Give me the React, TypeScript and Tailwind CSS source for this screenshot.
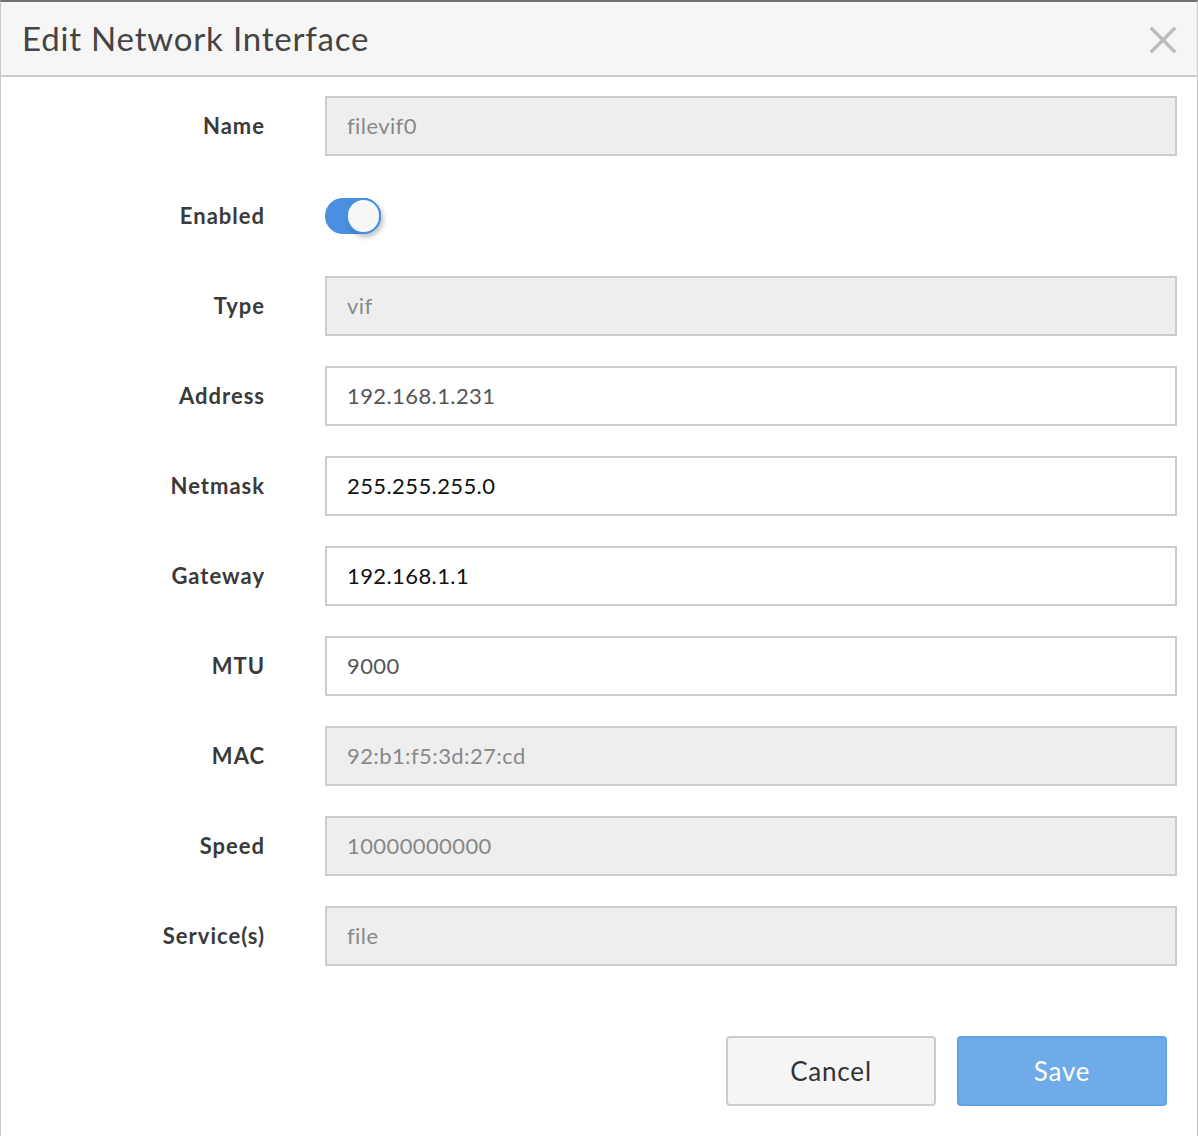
const fields = [
  { label: "Name", value: "filevif0", disabled: true },
  { label: "Enabled", toggle: true },
  { label: "Type", value: "vif", disabled: true },
  { label: "Address", value: "192.168.1.231", tone: "text-[#555]" },
  { label: "Netmask", value: "255.255.255.0", tone: "text-[#111]" },
  { label: "Gateway", value: "192.168.1.1", tone: "text-[#111]" },
  { label: "MTU", value: "9000", tone: "text-[#555]" },
  { label: "MAC", value: "92:b1:f5:3d:27:cd", disabled: true },
  { label: "Speed", value: "10000000000", disabled: true },
  { label: "Service(s)", value: "file", disabled: true },
];

function Toggle() {
  return (
    <div className="relative w-[56px] h-[36px] rounded-full bg-[#4a90e2]">
      <div className="absolute right-0 top-0 w-[35px] h-[36px] rounded-full bg-[#f7f7f7] border-2 border-[#4a90e2] shadow-[2px_3px_5px_rgba(0,0,0,0.25)]" />
    </div>
  );
}

export default function App() {
  return (
    <div className="w-[1198px] h-[1136px] bg-white font-['Lato',sans-serif] border-t-2 border-[#707070] border-l border-r border-l-[#c8c8c8] border-r-[#c8c8c8] overflow-hidden">
      <div className="h-[75px] bg-[#f6f6f6] border-b-2 border-[#cccccc] flex items-center justify-between pl-[21px] pr-[20px]">
        <h1 className="text-[33px] text-[#444] leading-none tracking-[0.8px]">Edit Network Interface</h1>
        <svg width="28" height="28" viewBox="0 0 28 28" className="mt-[2px]">
          <path d="M3 3 L25 25 M25 3 L3 25" stroke="#bdbdbd" strokeWidth="3.5" strokeLinecap="square" />
        </svg>
      </div>
      <div className="grid grid-cols-[264px_1fr] gap-x-[60px] gap-y-[30px] pt-[19px] pr-[20px]">
        {fields.map((f) => (
          <div key={f.label} className="contents">
            <div className="h-[60px] flex items-center justify-end pb-[2px] text-[22px] font-bold tracking-[1px] text-[#3a3a3a]">
              {f.label}
            </div>
            <div className="h-[60px] flex items-center">
              {f.toggle ? (
                <Toggle />
              ) : (
                <div
                  className={`w-full h-[60px] border-2 border-[#cccccc] flex items-center pl-[20px] pb-[1px] text-[22px] tracking-[0.4px] ${
                    f.disabled ? "bg-[#eeeeee] text-[#888]" : `bg-white ${f.tone}`
                  }`}
                >
                  {f.value}
                </div>
              )}
            </div>
          </div>
        ))}
      </div>
      <div className="flex justify-end gap-[21px] pr-[30px] mt-[70px]">
        <button className="w-[210px] h-[70px] rounded-[4px] border-2 border-[#cccccc] bg-[#f5f5f5] text-[26px] tracking-[0.8px] text-[#333]">
          Cancel
        </button>
        <button className="w-[210px] h-[70px] rounded-[4px] border-2 border-[#62a2e6] bg-[#6eabe8] text-[26px] tracking-[0.8px] text-white">
          Save
        </button>
      </div>
    </div>
  );
}
